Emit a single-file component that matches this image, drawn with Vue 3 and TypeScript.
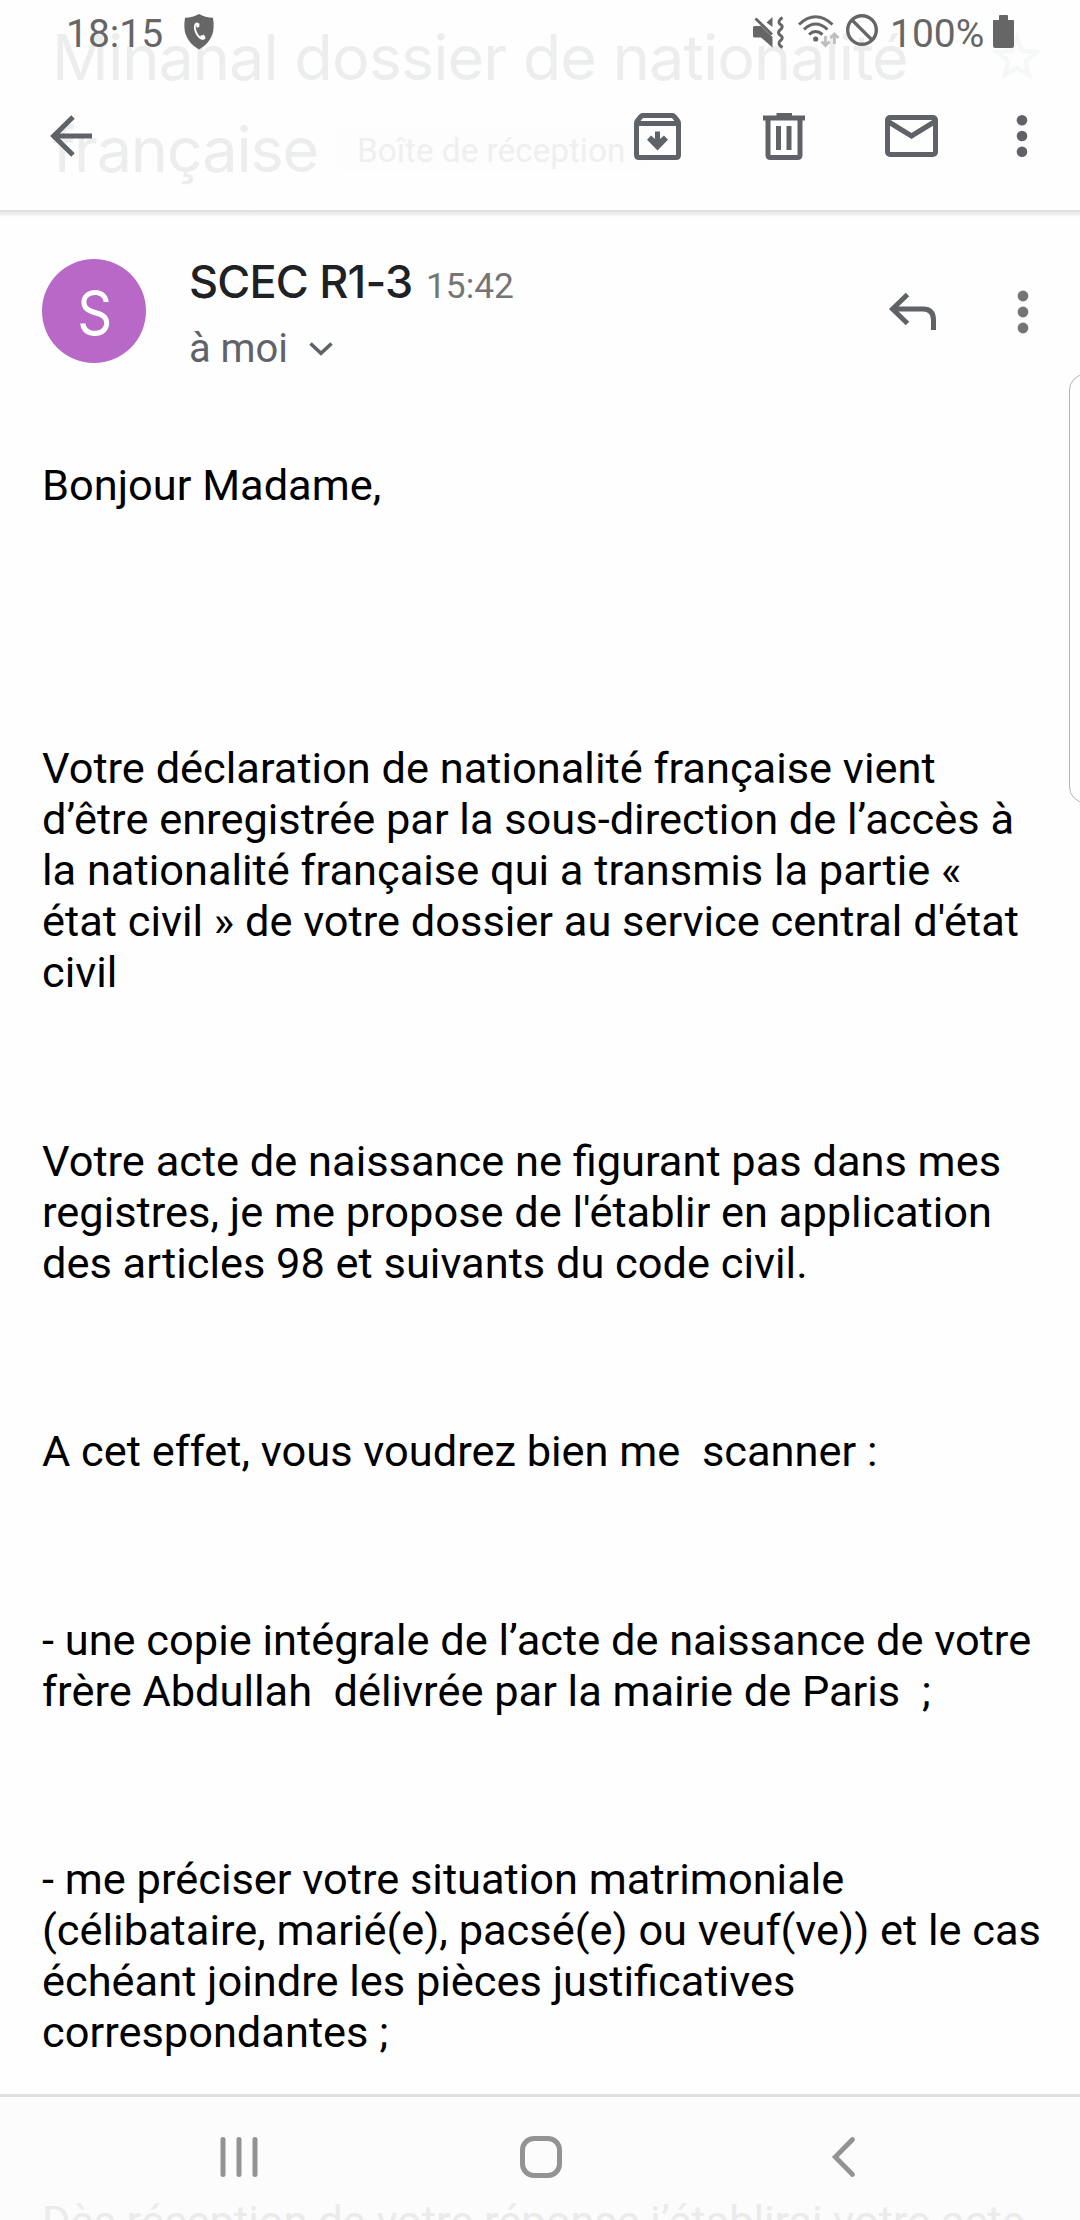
<script setup lang="ts">
interface Paragraph {
  lines: string[]
  kind?: 'far' | 'veiled'
}

const paragraphs: Paragraph[] = [
  { lines: ['Bonjour Madame,'] },
  {
    kind: 'far',
    lines: [
      'Votre déclaration de nationalité française vient',
      'd’être enregistrée par la sous-direction de l’accès à',
      'la nationalité française qui a transmis la partie «',
      "état civil » de votre dossier au service central d'état",
      'civil',
    ],
  },
  {
    lines: [
      'Votre acte de naissance ne figurant pas dans mes',
      "registres, je me propose de l'établir en application",
      'des articles 98 et suivants du code civil.',
    ],
  },
  { lines: ['A cet effet, vous voudrez bien me  scanner :'] },
  {
    lines: [
      '- une copie intégrale de l’acte de naissance de votre',
      'frère Abdullah  délivrée par la mairie de Paris  ;',
    ],
  },
  {
    lines: [
      '- me préciser votre situation matrimoniale',
      '(célibataire, marié(e), pacsé(e) ou veuf(ve)) et le cas',
      'échéant joindre les pièces justificatives',
      'correspondantes ;',
    ],
  },
  { kind: 'veiled', lines: ['Dès réception de votre réponse j’établirai votre acte'] },
]
</script>

<template>
  <div class="screen">
    <header class="subject">
      <div class="subject-text">
        <div class="subject-line first">Minahal dossier de nationalité</div>
        <div class="subject-row">
          <span class="subject-line second">française</span>
          <span class="label">Boîte de réception</span>
        </div>
      </div>
      <svg class="star" width="52" height="48" viewBox="0 0 52 48">
        <path d="M26 5.500 L31.200 17.800 L45.500 19 L34.600 28.200 L38 42 L26 34.700 L14 42 L17.400 28.200 L6.500 19 L20.800 17.800 Z" fill="none" stroke="#f6f8f8" stroke-width="4.500" />
      </svg>
    </header>

    <section class="sender">
      <div class="avatar"><span>S</span></div>
      <div class="who">
        <div class="who-top"><span class="name">SCEC R1-3</span><span class="time">15:42</span></div>
        <div class="who-to">
          <span>à moi</span>
          <svg width="24" height="14" viewBox="0 0 24 14"><path d="M1.500 1.500 L12 11.300 L22.500 1.500" fill="none" stroke="#5f6368" stroke-width="3.600" /></svg>
        </div>
      </div>
      <svg class="reply" width="48" height="38" viewBox="0 0 48 38">
        <path d="M18.500 1.500 L3.500 16 L18.500 30.500 M4 16 H34 Q44.500 16 44.500 27 V37" fill="none" stroke="#5f6368" stroke-width="5" />
      </svg>
      <svg class="more" width="12" height="44" viewBox="0 0 12 44" fill="#757575">
        <circle cx="6" cy="6" r="5.400" /><circle cx="6" cy="22" r="5.400" /><circle cx="6" cy="38" r="5.400" />
      </svg>
    </section>

    <main class="body">
      <p v-for="(p, i) in paragraphs" :key="i" :class="p.kind">
        <span v-for="line in p.lines" :key="line" class="line">{{ line }}</span>
      </p>
    </main>

    <div class="edge-panel"></div>

    <div class="top">
      <div class="status">
        <span class="clock">18:15</span>
        <svg class="shield" width="30" height="36" viewBox="0 0 30 36">
          <path d="M15 0 Q21 3.500 29 3.800 Q30.500 14 28.500 20 Q25 30 15 35.500 Q5 30 1.500 20 Q-.5 14 1 3.800 Q9 3.500 15 0Z" fill="#666" />
          <path d="M13.600 9.500 Q10.600 9.300 10.800 14 Q12 21.500 17.500 24.600 Q20 25.500 20.800 23.500" fill="none" stroke="#fff" stroke-width="1.800" />
          <path d="M12.300 8.800 L15.500 9.500 L15.200 13.200 L12.300 13.600Z M16.700 21.500 L20 20.700 L21.500 23.500 L19 25.800 L16 24Z" fill="#fff" />
        </svg>
        <svg class="mute" width="32" height="33" viewBox="0 0 32 33">
          <path d="M0 11.500 Q0 10 1.500 10 H8 L19.500 21 V31.500 L8 21.500 H1.500 Q0 21.500 0 20Z M13.500 6.500 L19.500 1 V11Z" fill="#666" />
          <path d="M2.500 2.500 L19 18.500" stroke="#666" stroke-width="2.800" />
          <path d="M29.500 1.500 Q24 5 27 8.200 Q31.500 10.500 27 14 Q24 16.500 27 19 Q31.500 22 27 25 Q24 28 29.500 31.500" fill="none" stroke="#666" stroke-width="3" />
        </svg>
        <svg class="wifi" width="42" height="33" viewBox="0 0 42 33">
          <g fill="none" stroke="#666" stroke-width="3">
            <path d="M1 9.500 Q17.500 -6 34.500 9.500" /><path d="M6 14.500 Q17.500 3.500 29.500 14.500" /><path d="M11 19.500 Q17.500 13.500 24.500 19.500" />
          </g>
          <circle cx="17.700" cy="24" r="2.600" fill="#666" />
          <path d="M27.500 21 V30 M23.500 26.500 L27.500 30.500 L31.500 26.500 M36.500 29 V20 M32.500 23 L36.500 19 L40.500 23" fill="none" stroke="#bebfbf" stroke-width="2.800" />
        </svg>
        <svg class="ban" width="32" height="32" viewBox="0 0 32 32">
          <circle cx="16" cy="16" r="14.300" fill="none" stroke="#666" stroke-width="3.400" /><path d="M6 6 L26 26" stroke="#666" stroke-width="3.200" />
        </svg>
        <span class="percent">100%</span>
        <svg class="battery" width="21" height="33" viewBox="0 0 21 33">
          <path d="M6 1 Q6 0 7 0 H14 Q15 0 15 1 V5 H20 Q21 5 21 6 V31 Q21 33 19 33 H2 Q0 33 0 31 V6 Q0 5 1 5 H6Z" fill="#666" />
        </svg>
      </div>

      <div class="toolbar">
        <svg class="back" width="42" height="42" viewBox="0 0 42 42">
          <path d="M23 2 L3.700 21 L23 40 M4 21 H42" fill="none" stroke="#5f6368" stroke-width="5" />
        </svg>
        <svg class="archive" width="47" height="47" viewBox="0 0 47 47">
          <path fill-rule="evenodd" fill="#5f6368" d="M8.500 0 H38.500 Q40.500 0 42 1.800 L45.500 6 Q47 8 47 10 V42 Q47 47 42 47 H5 Q0 47 0 42 V10 Q0 8 1.500 6 L5 1.800 Q6.500 0 8.500 0Z M9 5 L6.500 8 H40.500 L38 5Z M5 13 V42 H42 V13Z" />
          <path d="M21 18.500 H26 V26 L30 22.500 L34 26.700 L23.500 37.500 L13 26.700 L17 22.500 L21 26Z" fill="#5f6368" />
        </svg>
        <svg class="trash" width="42" height="47" viewBox="0 0 42 47">
          <path fill-rule="evenodd" fill="#5f6368" d="M13.500 0 H29 V2.500 H42 V7.500 H39.500 V42 Q39.500 47 34.500 47 H7.500 Q2.500 47 2.500 42 V7.500 H0 V2.500 H13.500Z M7.500 7.500 V42 H34.500 V7.500Z" />
          <path d="M13 13 H18 V37 H13Z M23.500 13 H28.500 V37 H23.500Z" fill="#5f6368" />
        </svg>
        <svg class="mail" width="53" height="42" viewBox="0 0 53 42">
          <rect x="2.500" y="2.500" width="48" height="37" rx="2.500" fill="none" stroke="#5f6368" stroke-width="5" />
          <path d="M3 6.500 L26.500 21 L50 6.500" fill="none" stroke="#5f6368" stroke-width="5.200" />
        </svg>
        <svg class="dots" width="12" height="44" viewBox="0 0 12 44" fill="#5f6368">
          <circle cx="6" cy="6.300" r="5.300" /><circle cx="6" cy="22" r="5.300" /><circle cx="6" cy="37.700" r="5.300" />
        </svg>
      </div>
      <div class="top-shadow"></div>
    </div>

    <nav class="navbar">
      <svg width="38" height="40" viewBox="0 0 38 40"><path d="M3 2.500 V37.500 M19 2.500 V37.500 M35 2.500 V37.500" stroke="#939393" stroke-width="5" stroke-linecap="round" /></svg>
      <svg class="home" width="42" height="42" viewBox="0 0 42 42"><rect x="2.500" y="2.500" width="37" height="37" rx="11.500" fill="none" stroke="#939393" stroke-width="5" /></svg>
      <svg class="previous" width="23" height="40" viewBox="0 0 23 40"><path d="M20.500 2.500 L3.300 20 L20.500 37.500" fill="none" stroke="#939393" stroke-width="4.800" stroke-linecap="round" /></svg>
    </nav>
  </div>
</template>

<style>
body {
  margin: 0;
  background: #fefefe;
}
</style>

<style scoped>
.screen {
  position: relative;
  width: 1080px;
  height: 2220px;
  overflow: hidden;
  background: #fefefe;
  font-family: Roboto, "Liberation Sans", sans-serif;
}
svg {
  display: block;
  flex: none;
  overflow: visible;
}
.subject {
  display: flex;
  justify-content: space-between;
  align-items: flex-start;
  box-sizing: border-box;
  height: 210px;
  padding: 11px 37px 0 52px;
}
.subject-line {
  font: 400 63px/92px Inter, "Open Sans", sans-serif;
  color: #eceeed;
  white-space: nowrap;
}
.first {
  letter-spacing: -1px;
}
.second {
  letter-spacing: -1.200px;
}
.subject-row {
  display: flex;
  align-items: center;
}
.label {
  height: 44px;
  margin: 2px 0 0 17px;
  padding: 0 22px;
  border-radius: 8px;
  background: #fdfdfd;
  color: #efefef;
  font-size: 33.300px;
  line-height: 46px;
  white-space: nowrap;
}
.star {
  margin-top: 22px;
}
.sender {
  display: flex;
  align-items: flex-start;
  box-sizing: border-box;
  height: 250px;
  padding: 49px 51px 0 42px;
}
.avatar {
  display: flex;
  align-items: center;
  justify-content: center;
  width: 104px;
  height: 104px;
  border-radius: 50%;
  background: #b868c6;
  color: #fff;
  font: 400 62px/104px Inter, sans-serif;
}
.avatar span {
  transform: scaleX(0.88);
  padding: 3px 0 0 2px;
}
.who {
  flex: 1;
  margin-left: 43px;
}
.who-top {
  display: flex;
  align-items: baseline;
  height: 59px;
  line-height: 46px;
  white-space: nowrap;
}
.name {
  font: 500 45px/46px Inter, sans-serif;
  color: #202124;
  letter-spacing: -0.8px;
}
.time {
  margin-left: 13.500px;
  font-size: 35.300px;
  color: #757575;
}
.who-to {
  display: flex;
  align-items: center;
  height: 60px;
  color: #5f6368;
  font-size: 39.900px;
}
.who-to svg {
  margin: 1px 0 0 21px;
}
.reply {
  margin: 33.500px 80px 0 0;
}
.more {
  margin-top: 30.500px;
}
.body {
  padding: 0 42px;
  color: #000;
}
.body p {
  margin: 137.600px 0 0;
}
.body p:first-child {
  margin-top: 0;
}
.body p.far {
  margin-top: 232px;
}
.body p.veiled {
  position: relative;
  z-index: 2;
  color: #ebebeb;
}
.line {
  display: block;
  font-size: 43.380px;
  line-height: 51px;
  white-space: pre;
}
.edge-panel {
  position: absolute;
  box-sizing: border-box;
  left: 1069px;
  top: 374px;
  width: 40px;
  height: 429px;
  border: 1.500px solid #b4b4b4;
  border-radius: 16px;
}
.top {
  position: absolute;
  inset: 0 0 auto 0;
}
.top-shadow {
  height: 7px;
  background: linear-gradient(#dcdcdc, #fefefe);
}
.status {
  display: flex;
  align-items: flex-start;
  height: 62px;
  color: #666;
  font-size: 39px;
  line-height: 46px;
}
.clock {
  width: 118px;
  margin: 11px 0 0 66px;
}
.shield {
  margin-top: 14px;
}
.mute {
  margin: 16px 0 0 539px;
}
.wifi {
  margin: 15px 0 0 13px;
}
.ban {
  margin: 14px 0 0 6px;
}
.percent {
  width: 103px;
  margin: 11px 0 0 12px;
}
.battery {
  margin-top: 15px;
}
.toolbar {
  display: flex;
  align-items: center;
  height: 148px;
}
.back {
  margin-left: 50px;
}
.archive {
  margin-left: 542px;
}
.trash {
  margin-left: 82px;
}
.mail {
  margin-left: 80px;
}
.dots {
  margin-left: 78px;
}
.navbar {
  position: absolute;
  inset: auto 0 0 0;
  display: flex;
  align-items: flex-start;
  box-sizing: border-box;
  height: 126px;
  padding: 40px 0 0 220px;
  border-top: 3px solid #e0e0e0;
  background: #fcfcfc;
}
.home {
  margin: -1px 0 0 262px;
}
.previous {
  margin-left: 270px;
}
</style>
